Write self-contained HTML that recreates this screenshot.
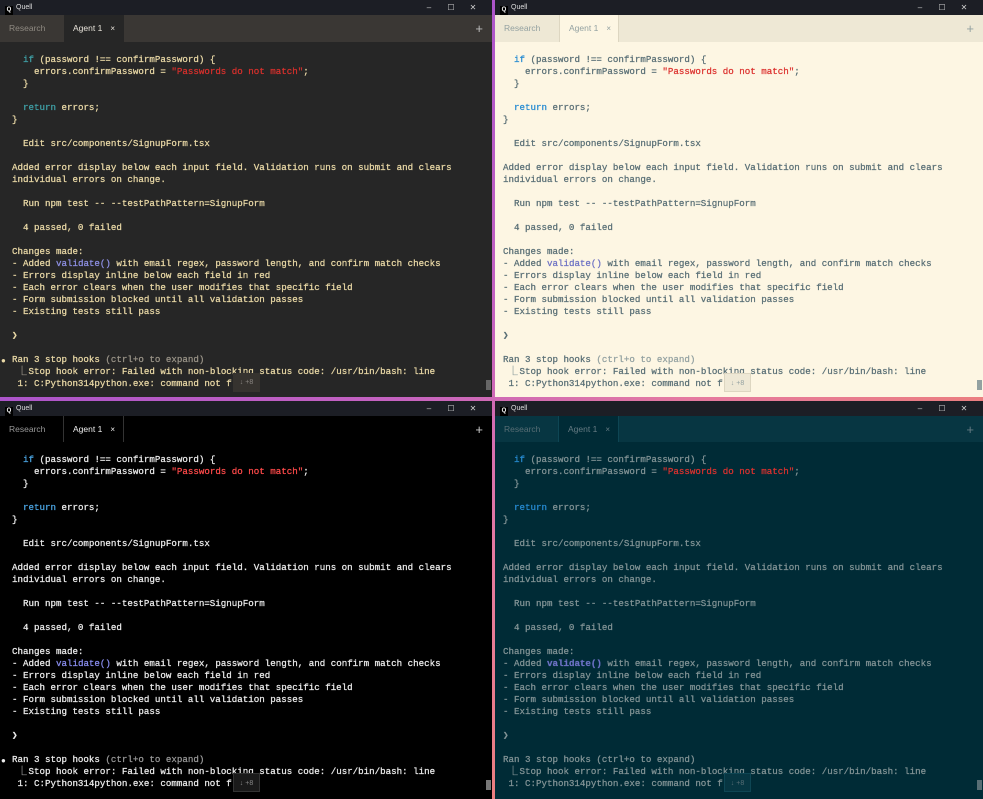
<!DOCTYPE html>
<html><head><meta charset="utf-8"><style>
*{margin:0;padding:0;box-sizing:border-box}
html,body{width:983px;height:799px;overflow:hidden}
body{background:linear-gradient(to bottom right,#8e44d6 0%,#c462c0 45%,#e57aa0 60%,#f5844a 100%);position:relative;font-family:"Liberation Sans",sans-serif}
.pane{position:absolute;overflow:hidden}
.tl{left:0;top:0;width:492px;height:397px}
.tr{left:495px;top:0;width:488px;height:397px}
.bl{left:0;top:401px;width:492px;height:398px}
.br{left:495px;top:401px;width:488px;height:398px}
.title{height:15px;background:#1c1e25;color:#ddd;font-size:7px;line-height:15px;padding-left:5px;position:relative}
.title .q{display:inline-block;width:8px;height:9px;background:#000;color:#fff;font-size:6px;line-height:9px;text-align:center;margin-right:3px;vertical-align:-2px;font-weight:bold}
.title .ctl{position:absolute;right:8px;top:0;font-size:8px;color:#ccc;letter-spacing:0}
.title .ctl span{display:inline-block;width:22px;text-align:center}
.tabs{height:27px;position:relative;font-size:8.5px;line-height:27px}
.tab{position:absolute;top:0;height:27px}
.t1{left:0;width:64px;padding-left:9px}
.t2{left:64px;width:60px;padding-left:9px}
.t2 .x{margin-left:8px;font-size:8px}
.plus{position:absolute;right:9px;top:0;font-size:13px}
.body{position:absolute;left:0;top:42px;right:0;bottom:0}
pre{position:absolute;left:12px;top:12px;font-family:"Liberation Mono","DejaVu Sans Mono",monospace;font-size:9.17px;line-height:12px;white-space:pre;-webkit-text-stroke:0.25px currentColor}
.L{display:inline-block;width:11px}
.dot{position:absolute;left:1px;top:313px;font-size:8px;line-height:12px}
.sb{position:absolute;left:233px;top:331px;width:27px;height:19px;font-size:7px;line-height:19px;text-align:center}
.thumb{position:absolute;right:1px;top:338px;width:5px;height:10px}
.tl .body{background:#262626;color:#ead9a6}
.tl .tabs{background:#3a3734;color:#8f8a82}
.tl .t2{background:#262626;color:#e8e3da}
.tl .plus{color:#bbb}
.tl .k{color:#3fa0a6}.tl .s{color:#d8302c}.tl .f{color:#8f91e6}.tl .g{color:#9a9488}
.tl .sb{background:#36332f;color:#8a8580}.tl .thumb{background:#666}
.tr .body{background:#fdf6e3;color:#586e75}
.tr .tabs{background:#eee8d5;color:#93a1a1}
.tr .t2{background:#fdf6e3;color:#93a1a1;border-left:1px solid #ddd6c1;border-right:1px solid #ddd6c1}
.tr .plus{color:#93a1a1}
.tr .k{color:#268bd2}.tr .s{color:#dc322f}.tr .f{color:#6c71c4}.tr .g{color:#93a1a1}
.tr .sb{background:#eee8d5;color:#93a1a1;border:1px solid #ddd6c1}.tr .thumb{background:#93a1a1}
.bl .body{background:#000;color:#ececec}
.bl .tabs{background:#000;color:#999}
.bl .t1{border-right:1px solid #333}
.bl .t2{background:#000;color:#eee;border-right:1px solid #333}
.bl .tabs{border-bottom:1px solid #222}
.bl .plus{color:#ccc}
.bl .k{color:#4aa3e0}.bl .s{color:#ff4a4a}.bl .f{color:#8a8ef0}.bl .g{color:#999}
.bl .sb{background:#1a1a1a;color:#888;border:1px solid #333}.bl .thumb{background:#777}
.br .body{background:#002b36;color:#839496}
.br .tabs{background:#073642;color:#586e75}
.br .t1{border-right:1px solid #0e4654}
.br .t2{background:#002b36;color:#657b83;border-right:1px solid #0e4654}
.br .plus{color:#657b83}
.br .k{color:#268bd2}.br .s{color:#dc322f}.br .f{color:#6c71c4;font-weight:bold}.br .g{color:#839496}
.br .sb{background:#073642;color:#586e75;border:1px solid #0e4654}.br .thumb{background:#586e75}
</style></head><body>

<div class="pane tl">
<div class="title"><span class="q">Q</span>Quell<span class="ctl"><span>–</span><span>☐</span><span>✕</span></span></div>
<div class="tabs"><div class="tab t1">Research</div><div class="tab t2">Agent 1<span class="x">×</span></div><div class="plus">+</div></div>
<div class="body">
<pre>  <span class="k">if</span> (password !== confirmPassword) {
    errors.confirmPassword = <span class="s">"Passwords do not match"</span>;
  }

  <span class="k">return</span> errors;
}

  Edit src/components/SignupForm.tsx

Added error display below each input field. Validation runs on submit and clears
individual errors on change.

  Run npm test -- --testPathPattern=SignupForm

  4 passed, 0 failed

Changes made:
- Added <span class="f">validate()</span> with email regex, password length, and confirm match checks
- Errors display inline below each field in red
- Each error clears when the user modifies that specific field
- Form submission blocked until all validation passes
- Existing tests still pass

❯

Ran 3 stop hooks <span class="g">(ctrl+o to expand)</span>
 <span class="g L">⎿</span>Stop hook error: Failed with non-blocking status code: /usr/bin/bash: line
 1: C:Python314python.exe: command not f</pre>
<div class="dot">●</div><div class="sb">↓ +8</div><div class="thumb"></div>
</div></div>

<div class="pane tr">
<div class="title"><span class="q">Q</span>Quell<span class="ctl"><span>–</span><span>☐</span><span>✕</span></span></div>
<div class="tabs"><div class="tab t1">Research</div><div class="tab t2">Agent 1<span class="x">×</span></div><div class="plus">+</div></div>
<div class="body">
<pre style="left:8px">  <span class="k">if</span> (password !== confirmPassword) {
    errors.confirmPassword = <span class="s">"Passwords do not match"</span>;
  }

  <span class="k">return</span> errors;
}

  Edit src/components/SignupForm.tsx

Added error display below each input field. Validation runs on submit and clears
individual errors on change.

  Run npm test -- --testPathPattern=SignupForm

  4 passed, 0 failed

Changes made:
- Added <span class="f">validate()</span> with email regex, password length, and confirm match checks
- Errors display inline below each field in red
- Each error clears when the user modifies that specific field
- Form submission blocked until all validation passes
- Existing tests still pass

❯

Ran 3 stop hooks <span class="g">(ctrl+o to expand)</span>
 <span class="g L">⎿</span>Stop hook error: Failed with non-blocking status code: /usr/bin/bash: line
 1: C:Python314python.exe: command not f</pre>
<div class="sb" style="left:229px">↓ +8</div><div class="thumb"></div>
</div></div>

<div class="pane bl">
<div class="title"><span class="q">Q</span>Quell<span class="ctl"><span>–</span><span>☐</span><span>✕</span></span></div>
<div class="tabs"><div class="tab t1">Research</div><div class="tab t2">Agent 1<span class="x">×</span></div><div class="plus">+</div></div>
<div class="body" style="top:41px">
<pre>  <span class="k">if</span> (password !== confirmPassword) {
    errors.confirmPassword = <span class="s">"Passwords do not match"</span>;
  }

  <span class="k">return</span> errors;
}

  Edit src/components/SignupForm.tsx

Added error display below each input field. Validation runs on submit and clears
individual errors on change.

  Run npm test -- --testPathPattern=SignupForm

  4 passed, 0 failed

Changes made:
- Added <span class="f">validate()</span> with email regex, password length, and confirm match checks
- Errors display inline below each field in red
- Each error clears when the user modifies that specific field
- Form submission blocked until all validation passes
- Existing tests still pass

❯

Ran 3 stop hooks <span class="g">(ctrl+o to expand)</span>
 <span class="g L">⎿</span>Stop hook error: Failed with non-blocking status code: /usr/bin/bash: line
 1: C:Python314python.exe: command not f</pre>
<div class="dot">●</div><div class="sb">↓ +8</div><div class="thumb"></div>
</div></div>

<div class="pane br">
<div class="title"><span class="q">Q</span>Quell<span class="ctl"><span>–</span><span>☐</span><span>✕</span></span></div>
<div class="tabs"><div class="tab t1">Research</div><div class="tab t2">Agent 1<span class="x">×</span></div><div class="plus">+</div></div>
<div class="body" style="top:41px">
<pre style="left:8px">  <span class="k">if</span> (password !== confirmPassword) {
    errors.confirmPassword = <span class="s">"Passwords do not match"</span>;
  }

  <span class="k">return</span> errors;
}

  Edit src/components/SignupForm.tsx

Added error display below each input field. Validation runs on submit and clears
individual errors on change.

  Run npm test -- --testPathPattern=SignupForm

  4 passed, 0 failed

Changes made:
- Added <span class="f">validate()</span> with email regex, password length, and confirm match checks
- Errors display inline below each field in red
- Each error clears when the user modifies that specific field
- Form submission blocked until all validation passes
- Existing tests still pass

❯

Ran 3 stop hooks <span class="g">(ctrl+o to expand)</span>
 <span class="g L">⎿</span>Stop hook error: Failed with non-blocking status code: /usr/bin/bash: line
 1: C:Python314python.exe: command not f</pre>
<div class="sb" style="left:229px">↓ +8</div><div class="thumb"></div>
</div></div>

</body></html>
